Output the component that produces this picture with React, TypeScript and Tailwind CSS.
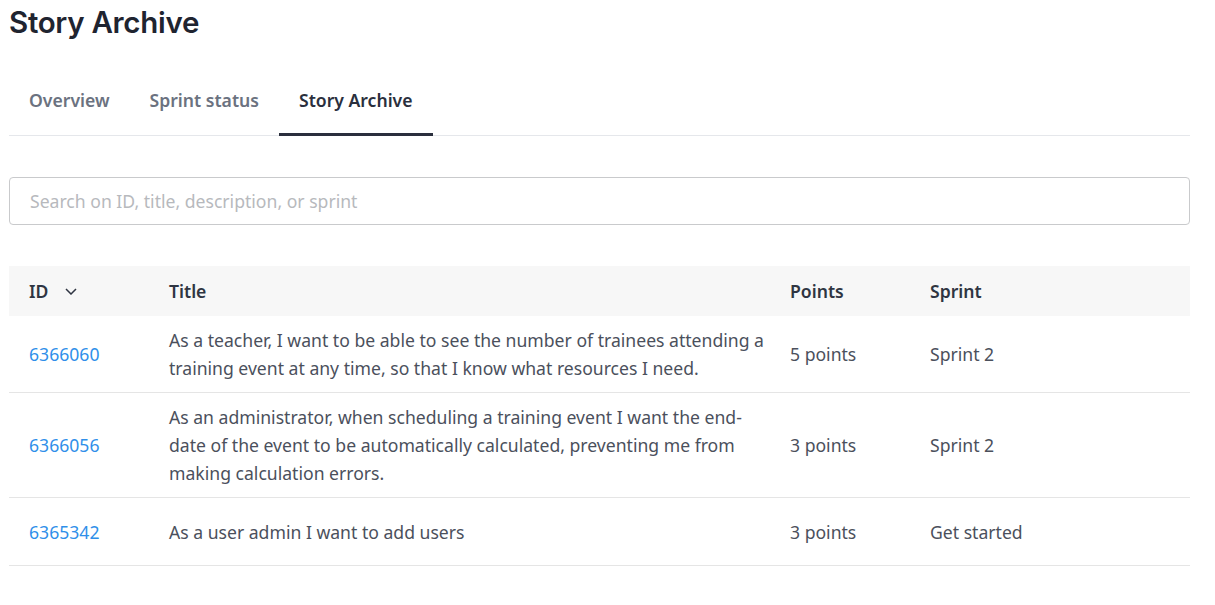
interface Story {
  id: string;
  title: string;
  points: string;
  sprint: string;
}

const stories: Story[] = [
  {
    id: "6366060",
    title:
      "As a teacher, I want to be able to see the number of trainees attending a training event at any time, so that I know what resources I need.",
    points: "5 points",
    sprint: "Sprint 2",
  },
  {
    id: "6366056",
    title:
      "As an administrator, when scheduling a training event I want the end-date of the event to be automatically calculated, preventing me from making calculation errors.",
    points: "3 points",
    sprint: "Sprint 2",
  },
  {
    id: "6365342",
    title: "As a user admin I want to add users",
    points: "3 points",
    sprint: "Get started",
  },
];

const tabs = ["Overview", "Sprint status", "Story Archive"];

export default function App() {
  return (
    <div className="min-h-screen bg-white px-[9px] pr-[25px] font-['Noto_Sans',sans-serif]">
      <h1 className="pt-[3px] text-[29.5px] leading-[38px] font-semibold text-[#1f2430] font-['Inter',sans-serif] tracking-[-0.3px]">
        Story Archive
      </h1>

      <div className="mt-[39px] flex border-b border-[#e5e7eb]">
        {tabs.map(tab => (
          <button
            key={tab}
            className={`px-5 pt-[7px] pb-[20px] text-[17.6px] leading-[26px] font-semibold border-b-[3px] -mb-px ${
              tab === "Story Archive"
                ? "border-[#2a2f3d] text-[#2a2f3d]"
                : "border-transparent text-[#6b7280]"
            }`}
          >
            {tab}
          </button>
        ))}
      </div>

      <div className="mt-[41px]">
        <input
          type="text"
          placeholder="Search on ID, title, description, or sprint"
          className="w-full h-[48px] rounded-[4px] border border-[#c9cacc] px-5 text-[17.6px] text-[#333] placeholder:text-[#b7b9bd] outline-none"
        />
      </div>

      <table className="mt-[41px] w-full table-fixed border-collapse text-[17.6px] leading-[28px]">
        <thead>
          <tr className="bg-[#f7f7f7] h-[50px]">
            <th className="w-[140px] pl-5 text-left font-semibold text-[#2f3542]">
              <span className="inline-flex items-center gap-[17px]">
                ID
                <svg width="12" height="7" viewBox="0 0 12 7" fill="none" stroke="currentColor" strokeWidth="1.5">
                  <path d="M1 1l5 5 5-5" />
                </svg>
              </span>
            </th>
            <th className="pl-5 text-left font-semibold text-[#2f3542]">Title</th>
            <th className="w-[140px] pl-5 text-left font-semibold text-[#2f3542]">Points</th>
            <th className="w-[280px] pl-5 text-left font-semibold text-[#2f3542]">Sprint</th>
          </tr>
        </thead>
        <tbody>
          {stories.map(story => (
            <tr key={story.id} className="border-b border-[#e5e5e5] h-[68px]">
              <td className="pl-5 py-[10px] align-middle text-[#2f8fe9]">{story.id}</td>
              <td className="pl-5 py-[10px] align-middle text-[#4b505c]">{story.title}</td>
              <td className="pl-5 py-[10px] align-middle text-[#4b505c]">{story.points}</td>
              <td className="pl-5 py-[10px] align-middle text-[#4b505c]">{story.sprint}</td>
            </tr>
          ))}
        </tbody>
      </table>
    </div>
  );
}
